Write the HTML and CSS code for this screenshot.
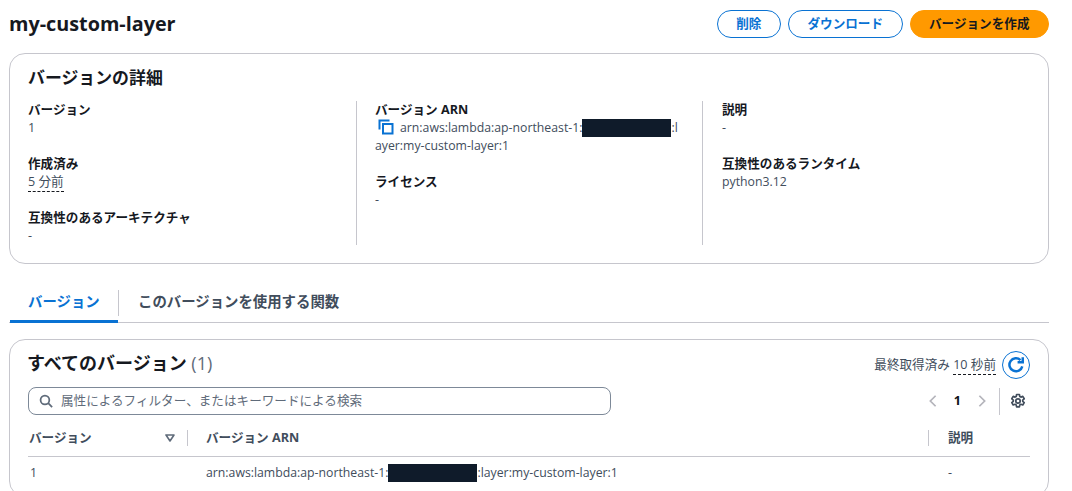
FILE: index.html
```html
<!DOCTYPE html>
<html lang="ja">
<head>
<meta charset="utf-8">
<title>my-custom-layer</title>
<link rel="stylesheet" href="styles.css">
</head>
<body>
<div class="page">
  <header class="head">
    <h1>my-custom-layer</h1>
    <div class="actions">
      <button class="btn">削除</button>
      <button class="btn">ダウンロード</button>
      <button class="btn primary">バージョンを作成</button>
    </div>
  </header>

  <section class="card details">
    <h2>バージョンの詳細</h2>
    <div class="cols">
      <div class="col">
        <div class="kv"><div class="k">バージョン</div><div class="v">1</div></div>
        <div class="kv"><div class="k">作成済み</div><div class="v"><span class="dotted">5 分前</span></div></div>
        <div class="kv"><div class="k">互換性のあるアーキテクチャ</div><div class="v">-</div></div>
      </div>
      <div class="col">
        <div class="kv">
          <div class="k">バージョン ARN</div>
          <div class="v lat arn">
            <svg class="copy" viewBox="0 0 16 16" width="16" height="16" aria-hidden="true"><path d="M1.5 10.5V1.5h10" fill="none" stroke="#0972d3" stroke-width="2"/><rect x="5" y="5" width="9.5" height="9.5" fill="none" stroke="#0972d3" stroke-width="2"/></svg>arn:aws:lambda:ap-northeast-1:<span class="redact"></span>:layer:my-custom-layer:1
          </div>
        </div>
        <div class="kv"><div class="k">ライセンス</div><div class="v">-</div></div>
      </div>
      <div class="col">
        <div class="kv"><div class="k">説明</div><div class="v">-</div></div>
        <div class="kv"><div class="k">互換性のあるランタイム</div><div class="v lat">python3.12</div></div>
      </div>
    </div>
  </section>

  <nav class="tabs">
    <div class="tab active"><span>バージョン</span></div>
    <div class="tab"><span>このバージョンを使用する関数</span></div>
  </nav>

  <section class="card versions">
    <div class="vhead">
      <h2>すべてのバージョン <span class="count">(1)</span></h2>
      <div class="fetch">
        <span>最終取得済み <span class="dotted">10 秒前</span></span>
        <button class="refresh" aria-label="更新">
          <svg viewBox="0 0 16 16" width="18" height="18" aria-hidden="true"><path d="M13.6 9.2A5.8 5.8 0 1 1 12 3.6" fill="none" stroke="#0972d3" stroke-width="2.2"/><path d="M14 1v4.6H9.4" fill="none" stroke="#0972d3" stroke-width="2.2"/></svg>
        </button>
      </div>
    </div>
    <div class="tools">
      <div class="search">
        <svg viewBox="0 0 16 16" width="14" height="14" aria-hidden="true"><circle cx="6.8" cy="6.8" r="5" fill="none" stroke="#5f6b7a" stroke-width="2"/><path d="M10.5 10.5L15 15" stroke="#5f6b7a" stroke-width="2"/></svg>
        <span>属性によるフィルター、またはキーワードによる検索</span>
      </div>
      <div class="pager">
        <svg viewBox="0 0 16 16" width="14" height="14" aria-hidden="true"><path d="M11 2L5 8l6 6" fill="none" stroke="#b4b4bb" stroke-width="2"/></svg>
        <b>1</b>
        <svg viewBox="0 0 16 16" width="14" height="14" aria-hidden="true"><path d="M5 2l6 6-6 6" fill="none" stroke="#b4b4bb" stroke-width="2"/></svg>
        <div class="gear">
          <svg viewBox="0 0 16 16" width="16" height="16" aria-hidden="true"><path d="M6.6 1.5h2.8l.4 2 1.1.6 1.9-.7 1.4 2.4-1.5 1.3v1.2l1.5 1.3-1.4 2.4-1.9-.7-1.1.6-.4 2H6.6l-.4-2-1.1-.6-1.9.7-1.4-2.4 1.5-1.3V7.1L1.8 5.8l1.4-2.4 1.9.7 1.1-.6z" fill="none" stroke="#414d5c" stroke-width="1.7" stroke-linejoin="round"/><circle cx="8" cy="8" r="2.2" fill="none" stroke="#414d5c" stroke-width="1.7"/></svg>
        </div>
      </div>
    </div>
    <div class="row thead">
      <div class="c1"><span>バージョン</span><svg viewBox="0 0 10 8" width="10" height="8" aria-hidden="true"><path d="M1 1h8L5 7z" fill="none" stroke="#5f6b7a" stroke-width="1.6" stroke-linejoin="round"/></svg></div>
      <div class="c2">バージョン ARN</div>
      <div class="c3">説明</div>
    </div>
    <div class="row tbody">
      <div class="c1 lat">1</div>
      <div class="c2 lat">arn:aws:lambda:ap-northeast-1:<span class="redact"></span>:layer:my-custom-layer:1</div>
      <div class="c3">-</div>
    </div>
  </section>
</div>
</body>
</html>
```
FILE: styles.css
```css
* { box-sizing: border-box; }
html, body { margin: 0; height: 491px; overflow: hidden; background: #fff; }
body {
  font-family: "Open Sans", "Noto Sans CJK JP", sans-serif;
  font-size: 12.6px;
  line-height: 18px;
  color: #16191f;
}
.page { width: 1049px; height: 491px; overflow: hidden; padding: 10px 0 0 9px; }
.head { display: flex; justify-content: space-between; align-items: center; height: 28px; }
h1 { margin: 0; font-size: 19.8px; line-height: 28px; font-weight: 700; color: #16191f; }
.actions { display: flex; gap: 7px; }
.btn {
  height: 28px;
  padding: 0 18.5px;
  border: 1px solid #0972d3;
  border-radius: 14px;
  background: #fff;
  color: #0972d3;
  font: 700 12.6px/18px "Open Sans", "Noto Sans CJK JP", sans-serif;
}
.primary { background: #ff9900; border-color: #ff9900; color: #16191f; }
.card {
  border: 1px solid #c6c6cd;
  border-radius: 16px;
  background: #fff;
  padding: 0 18px;
}
.details { height: 211px; margin-top: 15px; padding-top: 12px; }
h2 { margin: 0; font-size: 16.9px; line-height: 24px; font-weight: 700; color: #16191f; }
.cols { display: grid; grid-template-columns: 328px 346px 1fr; margin-top: 11px; }
.col { height: 144px; padding-right: 18px; }
.col + .col { border-left: 1px solid #c6c6cd; padding-left: 18px; }
.col + .col + .col { padding-left: 19px; }
.kv { margin-bottom: 18px; }
.k { font-weight: 700; height: 18px; }
.v { color: #414d5c; }
.lat { font-size: 12.27px; }
.arn { word-break: break-all; }
.copy { vertical-align: -3px; margin: 0 6px 0 3px; }
.dotted { border-bottom: 1px dashed #16191f; padding-bottom: 1px; }
.redact { display: inline-block; width: 89px; height: 18px; background: #0f1b2a; vertical-align: -5px; }
.tabs { display: flex; height: 33px; margin-top: 26px; border-bottom: 1px solid #c6c6cd; font-size: 14.4px; font-weight: 700; color: #414d5c; }
.tab { height: 33px; position: relative; }
.tab span { display: block; height: 26px; line-height: 23px; padding: 0 18px; }
.tab.active { width: 108px; margin-left: 1px; color: #0972d3; border-bottom: 3px solid #0972d3; }
.tab + .tab span { border-left: 1px solid #c6c6cd; padding: 0 0 0 19px; }
.versions { margin-top: 16px; height: 158px; padding-top: 11px; }
.vhead { display: flex; justify-content: space-between; align-items: center; height: 28px; }
.vhead h2 { align-self: flex-start; font-size: 18px; margin-left: -1px; }
.count { font-weight: 400; color: #5f6b7a; }
.fetch { display: flex; align-items: center; gap: 6px; color: #414d5c; }
.refresh { width: 28px; height: 28px; border: 1px solid #0972d3; border-radius: 50%; background: #fff; padding: 0; display: flex; align-items: center; justify-content: center; }
.tools { display: flex; justify-content: space-between; align-items: center; margin-top: 8px; height: 28px; }
.search { width: 583px; height: 28px; border: 1px solid #7d8998; border-radius: 8px; display: flex; align-items: center; gap: 8px; padding-left: 10px; color: #5f6b7a; }
.pager { display: flex; align-items: center; height: 28px; margin-right: 4px; }
.pager b { margin: 0 14px; color: #0f141a; }
.gear { border-left: 1px solid #c6c6cd; margin-left: 10px; padding-left: 10px; height: 27px; display: flex; align-items: center; }
.row { display: grid; grid-template-columns: 160px 740px 1fr; align-items: center; }
.thead { height: 37px; margin-top: 5px; border-bottom: 1px solid #c6c6cd; font-weight: 700; color: #414d5c; }
.thead .c1 { display: flex; justify-content: space-between; align-items: center; padding-right: 12px; padding-left: 1px; border-right: 1px solid #c6c6cd; height: 16px; line-height: 16px; width: 160px; }
.thead .c2, .tbody .c2 { padding-left: 18px; }
.thead .c3 { border-left: 1px solid #c6c6cd; padding-left: 19px; height: 16px; line-height: 16px; }
.tbody { height: 32px; color: #414d5c; }
.tbody .c1 { padding-left: 2px; }
.tbody .c3 { padding-left: 20px; }
```
